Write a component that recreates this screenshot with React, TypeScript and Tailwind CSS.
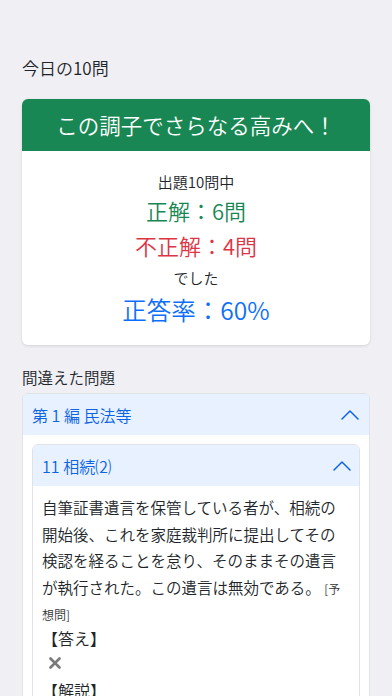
const font = { fontFamily: '"Noto Sans CJK JP", "Noto Sans", sans-serif' };

function XMark() {
  return (
    <svg width="12" height="12" viewBox="0 0 12 12" className="text-[#7a7a7a]">
      <path d="M1.5 1.5 L10.5 10.5 M10.5 1.5 L1.5 10.5" stroke="currentColor" strokeWidth="2.6" strokeLinecap="round" />
    </svg>
  );
}

function Chevron() {
  return (
    <svg width="18" height="10" viewBox="0 0 18 10" fill="none">
      <path d="M1 9 L9 1 L17 9" stroke="currentColor" strokeWidth="1.5" strokeLinecap="round" strokeLinejoin="round" />
    </svg>
  );
}

export default function App() {
  return (
    <div className="min-h-[696px] bg-[#efeff4] px-[22px] pt-[55px] font-[350] text-[#212529]" style={font}>
      <h1 className="text-[17px] leading-[26px]">今日の10問</h1>

      <div className="mt-[18px] overflow-hidden rounded-md bg-white shadow-[0_1px_3px_rgba(0,0,0,0.12)]">
        <div className="flex h-[52px] items-center justify-center bg-[#198754] text-[21.5px] text-white">
          この調子でさらなる高みへ！
        </div>
        <div className="flex flex-col items-center pb-[17px] pt-[20px]">
          <p className="text-[15px] leading-[22px]">出題10問中</p>
          <p className="mt-[1px] text-[22px] leading-[32px] text-[#198754]">正解：6問</p>
          <p className="mt-[3px] text-[22px] leading-[32px] text-[#dc3545]">不正解：4問</p>
          <p className="mt-[6px] text-[15px] leading-[22px]">でした</p>
          <p className="mt-[3px] text-[24.5px] leading-[36px] text-[#0d6efd]">正答率：60%</p>
        </div>
      </div>

      <h2 className="mt-[20px] text-[15.5px] leading-[24px]">間違えた問題</h2>

      <div className="mt-[4px] overflow-hidden rounded-t-md border border-[#dfe3e8] bg-white">
        <div className="flex h-[41px] items-center justify-between bg-[#e7f1ff] pl-[9px] pr-[10px] text-[16px] text-[#0c63e4]">
          <span>第 1 編 民法等</span>
          <Chevron />
        </div>
        <div className="px-[9px] pt-[9px]">
          <div className="overflow-hidden rounded-t-md border border-[#dfe3e8]">
            <div className="flex h-[41px] items-center justify-between bg-[#e7f1ff] pl-[9px] pr-[8px] text-[16px] text-[#0c63e4]">
              <span>11 相続⑵</span>
              <Chevron />
            </div>
            <div className="pb-[10px] pl-[9px] pr-[10px] pt-[8px]">
              <p className="text-[15.5px] leading-[26.5px]">
                自筆証書遺言を保管している者が、相続の開始後、これを家庭裁判所に提出してその検認を経ることを怠り、そのままその遺言が執行された。この遺言は無効である。{' '}
                <span className="text-[12px] leading-[20px] text-[#333]">[予想問]</span>
              </p>
              <p className="-mt-[1px] text-[16px] leading-[24px]">【答え】</p>
              <div className="ml-[7px] flex h-[26px] items-center">
                <XMark />
              </div>
              <p className="mt-[2px] text-[16px] leading-[24px]">【解説】</p>
            </div>
          </div>
        </div>
      </div>
    </div>
  );
}
